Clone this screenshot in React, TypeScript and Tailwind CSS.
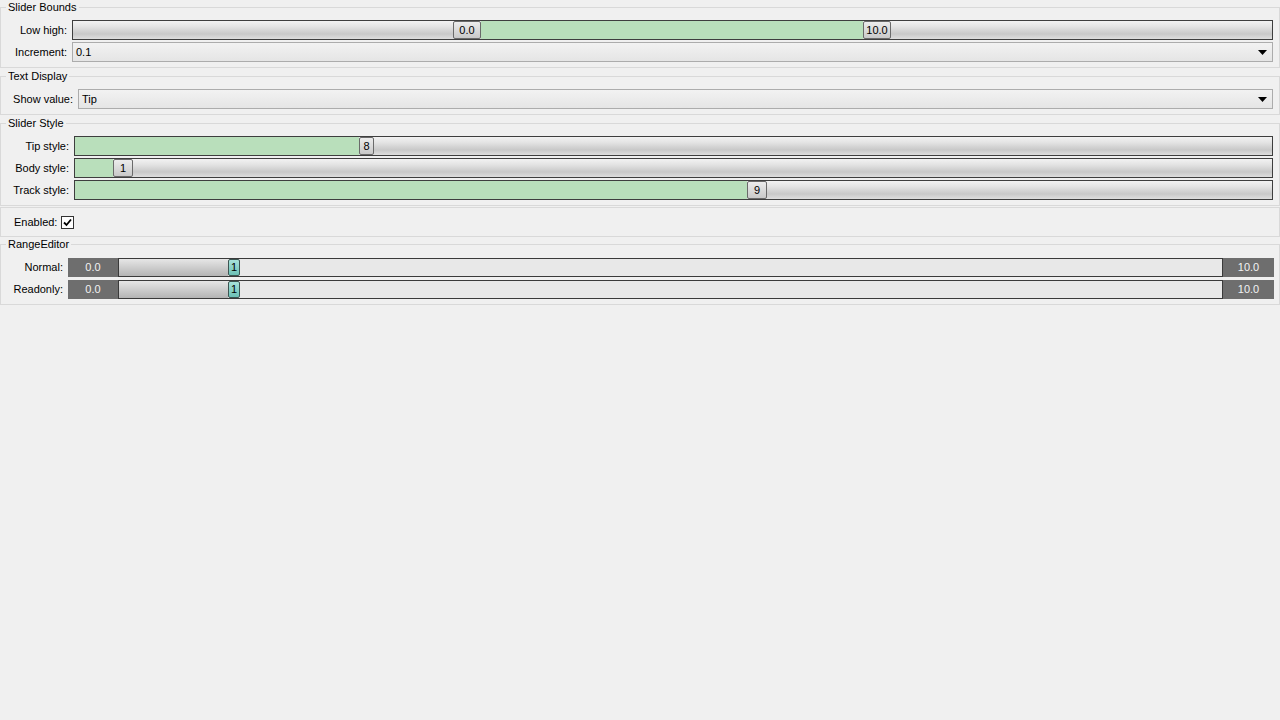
import React from "react";

const font = "font-['Liberation_Sans',Tahoma,sans-serif] text-[11px] text-black";
const gradTrack = "bg-[linear-gradient(to_bottom,#f2f2f2_0%,#e4e4e4_30%,#c8c8c8_72%,#dedede_100%)]";

function Group({ title, children, className = "" }: { title?: string; children: React.ReactNode; className?: string }) {
  return (
    <fieldset className={`border border-[#d9d9d9] m-0 p-0 ${className}`}>
      {title && <legend className="ml-[5px] px-[2px] leading-[14px]">{title}</legend>}
      {children}
    </fieldset>
  );
}

function Handle({ label, w, teal = false }: { label: string; w: number; teal?: boolean }) {
  return (
    <div
      style={{ width: w }}
      className={`h-full shrink-0 border rounded-[2px] flex items-center justify-center leading-none ${
        teal
          ? "border-[#3c5552] bg-[linear-gradient(to_bottom,#a7e2da,#6cc1b6)]"
          : "border-[#6a6a6a] bg-[linear-gradient(to_bottom,#ececec,#c9c9c9)]"
      }`}
    >
      {label}
    </div>
  );
}

function Combo({ value }: { value: string }) {
  return (
    <div className="flex-1 h-full border border-[#acacac] bg-[linear-gradient(to_bottom,#f2f2f2,#e5e5e5)] flex items-center pl-[3px] pr-[5px]">
      <span className="flex-1">{value}</span>
      <svg width="9" height="5" viewBox="0 0 9 5">
        <path d="M0 0 H9 L4.5 5 Z" fill="#000" />
      </svg>
    </div>
  );
}

function SingleSlider({ fill, label, hw }: { fill: number; label: string; hw: number }) {
  return (
    <div className={`flex-1 h-full border border-[#3e3e3e] ${gradTrack} flex`}>
      <div style={{ width: fill }} className="h-full bg-[#b9dfbb] shrink-0" />
      <Handle label={label} w={hw} />
    </div>
  );
}

function RangeRow({ label }: { label: string }) {
  return (
    <div className="flex h-[19px] items-center">
      <div className="w-[62px] text-right">{label}</div>
      <div className="ml-[5px] flex-1 flex h-full">
        <div className="w-[50px] h-full bg-[#6e6e6e] text-[#f2f2f2] flex items-center justify-center">0.0</div>
        <div className="flex-1 h-full border border-[#3a3a3a] bg-[#e8e8e8] flex">
          <div className="w-[109px] h-full bg-[linear-gradient(to_bottom,#e6e6e6,#b4b4b4)] shrink-0" />
          <Handle label="1" w={12} teal />
        </div>
        <div className="w-[51px] h-full bg-[#6e6e6e] text-[#f2f2f2] flex items-center justify-center">10.0</div>
      </div>
      <div className="w-[5px]" />
    </div>
  );
}

export default function App() {
  return (
    <div className={`w-[1280px] h-[720px] bg-[#f0f0f0] flex flex-col ${font}`}>
      <Group title="Slider Bounds">
        <div className="flex flex-col gap-[2px] pt-[6px] pb-[5px] pr-[6px]">
          <div className="flex h-[20px] items-center">
            <div className="w-[66px] text-right">Low high:</div>
            <div className={`ml-[5px] flex-1 h-full border border-[#3e3e3e] ${gradTrack} flex`}>
              <div className="w-[380px] shrink-0" />
              <Handle label="0.0" w={28} />
              <div className="w-[382px] h-full bg-[#b9dfbb] shrink-0" />
              <Handle label="10.0" w={28} />
            </div>
          </div>
          <div className="flex h-[20px] items-center">
            <div className="w-[66px] text-right">Increment:</div>
            <div className="ml-[5px] flex-1 h-full flex">
              <Combo value="0.1" />
            </div>
          </div>
        </div>
      </Group>
      <Group title="Text Display" className="mt-[1px]">
        <div className="flex flex-col pt-[6px] pb-[5px] pr-[6px]">
          <div className="flex h-[20px] items-center">
            <div className="w-[72px] text-right">Show value:</div>
            <div className="ml-[5px] flex-1 h-full flex">
              <Combo value="Tip" />
            </div>
          </div>
        </div>
      </Group>
      <Group title="Slider Style" className="mt-[1px]">
        <div className="flex flex-col gap-[2px] pt-[6px] pb-[5px] pr-[6px]">
          {[
            { l: "Tip style:", f: 284, v: "8", hw: 15 },
            { l: "Body style:", f: 38, v: "1", hw: 20 },
            { l: "Track style:", f: 672, v: "9", hw: 20 },
          ].map((r) => (
            <div key={r.l} className="flex h-[20px] items-center">
              <div className="w-[68px] text-right">{r.l}</div>
              <div className="ml-[5px] flex-1 h-full flex">
                <SingleSlider fill={r.f} label={r.v} hw={r.hw} />
              </div>
            </div>
          ))}
        </div>
      </Group>
      <Group className="mt-[1px]">
        <div className="flex items-center pl-[13px] h-[28px]">
          <span>Enabled:</span>
          <div className="ml-[4px] w-[13px] h-[13px] border border-[#333] bg-white flex items-center justify-center">
            <svg width="9" height="9" viewBox="0 0 9 9">
              <path d="M1 4.5 L3.5 7 L8 1.5" stroke="#000" strokeWidth="1.8" fill="none" />
            </svg>
          </div>
        </div>
      </Group>
      <Group title="RangeEditor">
        <div className="flex flex-col gap-[3px] pt-[7px] pb-[5px]">
          <RangeRow label="Normal:" />
          <RangeRow label="Readonly:" />
        </div>
      </Group>
    </div>
  );
}
